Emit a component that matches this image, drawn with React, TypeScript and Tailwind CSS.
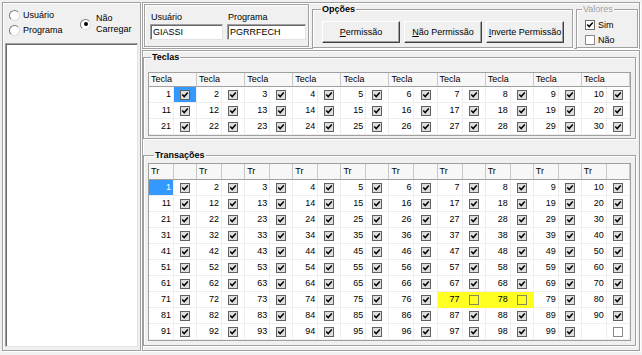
import clsx from "clsx";

const etched = "border border-[#a0a0a0] shadow-[inset_1px_1px_0_#fff,1px_1px_0_#fff]";
const sunken = "border border-t-[#a0a0a0] border-l-[#a0a0a0] border-r-[#e3e3e3] border-b-[#e3e3e3] shadow-[inset_1px_1px_0_#696969]";

function Check({ on, tone = "grid" }: { on: boolean; tone?: "grid" | "yellow" | "plain" }) {
  return (
    <span
      className={clsx(
        "inline-flex h-[10px] w-[10px] items-center justify-center border",
        on && tone === "grid" && "border-[#5f5f5f] bg-[#dedede]",
        on && tone === "plain" && "border-[#6b6b6b] bg-white",
        !on && tone === "yellow" && "border-[#8a8a55] bg-transparent",
        !on && tone !== "yellow" && "border-[#8a8a8a] bg-white"
      )}
    >
      {on && (
        <svg viewBox="0 0 10 10" className="h-[8px] w-[8px]">
          <path d="M1.5 4.5 L4 7 L8.5 2" stroke="#000" strokeWidth="1.8" fill="none" />
        </svg>
      )}
    </span>
  );
}

function Radio({ on }: { on?: boolean }) {
  return (
    <span className="inline-flex h-[11px] w-[11px] shrink-0 items-center justify-center rounded-full border border-t-[#7a7a7a] border-l-[#7a7a7a] border-r-[#dcdcdc] border-b-[#dcdcdc] bg-white">
      {on && <span className="h-[4px] w-[4px] rounded-full bg-black" />}
    </span>
  );
}

function Btn({ k, rest }: { k: string; rest: string }) {
  return (
    <button className="h-[22px] w-[78px] border border-t-white border-l-white border-r-[#404040] border-b-[#404040] bg-[#f0f0f0] text-[9px] shadow-[inset_-1px_-1px_0_#a0a0a0]">
      <span className="underline">{k}</span>
      {rest}
    </button>
  );
}

const gridCols = "grid grid-cols-[repeat(10,25px_23.1px)] w-fit border border-[#a0a0a0] bg-white";
const headCell = "flex items-center pl-[2px] bg-[#f7f7f7] border-r border-b border-r-[#c8c8c8] border-b-[#a0a0a0]";
const numCell = "flex items-center justify-end pr-[2px] border-r border-b border-[#eeeeee]";
const chkCell = "flex items-center justify-center border-r border-b border-[#eeeeee]";

function Teclas() {
  const rows = [0, 1, 2];
  return (
    <div className={clsx(gridCols, "grid-rows-[14px_repeat(3,16px)]")}>
      {Array.from({ length: 10 }).map((_, i) => (
        <div key={"h" + i} className={clsx(headCell, "col-span-2")}>Tecla</div>
      ))}
      {rows.map((r) =>
        Array.from({ length: 10 }).map((_, c) => {
          const n = r * 10 + c + 1;
          const sel = n === 1;
          return [
            <div key={"n" + n} className={numCell}>{n}</div>,
            <div key={"c" + n} className={clsx(chkCell, sel && "bg-[#3399ff]")}>
              <Check on />
            </div>,
          ];
        })
      )}
    </div>
  );
}

function Transacoes() {
  const rows = Array.from({ length: 10 }, (_, i) => i);
  return (
    <div className={clsx(gridCols, "grid-rows-[16px_repeat(10,16px)]")}>
      {Array.from({ length: 10 }).map((_, i) => [
        <div key={"h" + i} className={headCell}>Tr</div>,
        <div key={"e" + i} className={headCell} />,
      ])}
      {rows.map((r) =>
        Array.from({ length: 10 }).map((_, c) => {
          const n = r * 10 + c + 1;
          const off = n === 77 || n === 78 || n === 100;
          const yellow = n === 77 || n === 78;
          return [
            <div
              key={"n" + n}
              className={clsx(numCell, n === 1 && "bg-[#3399ff] text-white", yellow && "bg-[#ffff22] border-[#ffff22]")}
            >
              {n < 100 ? n : ""}
            </div>,
            <div key={"c" + n} className={clsx(chkCell, yellow && "bg-[#ffff22] border-[#ffff22]")}>
              <Check on={!off} tone={yellow ? "yellow" : "grid"} />
            </div>,
          ];
        })
      )}
    </div>
  );
}

export default function App() {
  return (
    <div className="flex h-[355px] w-[642px] gap-[1px] overflow-hidden bg-[#f0f0f0] px-[2px] pt-[2px] pb-[4px] font-['Liberation_Sans',Arial,sans-serif] text-[9px] leading-none text-black">
      {/* left: mode + list */}
      <div className={clsx(etched, "flex w-[139px] flex-col")}>
        <div className="flex h-[40px]">
          <div className="flex w-[77px] flex-col gap-[2px] pt-[6px] pl-[6px]">
            <label className="flex h-[13px] items-center gap-[3px]">
              <Radio />
              Usuário
            </label>
            <label className="flex h-[13px] items-center gap-[3px]">
              <Radio />
              Programa
            </label>
          </div>
          <label className="flex items-center gap-[5px] pt-[2px]">
            <Radio on />
            <span className="leading-[11px]">
              Não
              <br />
              Carregar
            </span>
          </label>
        </div>
        <div className={clsx(sunken, "mx-[2px] mb-[3px] flex-1 bg-white")} />
      </div>

      <div className="flex flex-1 flex-col gap-[1px]">
        {/* top options */}
        <div className={clsx(etched, "flex h-[47px] gap-[3px] pl-[1px]")}>
          <div className={clsx(etched, "mt-[1px] flex h-[43px] w-[165px] gap-[4px] pt-[8px] pl-[5px]")}>
            <div className="flex w-[73px] flex-col gap-[2px]">
              <span className="pl-[1px]">Usuário</span>
              <div className={clsx(sunken, "flex h-[16px] items-center bg-white pl-[2px]")}>GIASSI</div>
            </div>
            <div className="flex w-[79px] flex-col gap-[2px]">
              <span className="pl-[1px]">Programa</span>
              <div className={clsx(sunken, "flex h-[16px] items-center bg-white pl-[2px]")}>PGRRFECH</div>
            </div>
          </div>

          <fieldset className={clsx(etched, "mt-[2px] h-[43px] w-[261px]")}>
            <legend className="ml-[8px] px-[1px] font-bold">Opções</legend>
            <div className="flex gap-[4px] pt-[7px] pl-[9px]">
              <Btn k="P" rest="ermissão" />
              <Btn k="N" rest="ão Permissão" />
              <Btn k="I" rest="nverte Permissão" />
            </div>
          </fieldset>

          <fieldset className={clsx(etched, "mt-[2px] h-[43px] w-[62px]")}>
            <legend className="ml-[5px] px-[1px] text-[#a0a0a0]">Valores</legend>
            <div className="flex flex-col gap-[3px] pt-[5px] pl-[8px]">
              <label className="flex h-[12px] items-center gap-[3px]">
                <Check on tone="plain" />
                Sim
              </label>
              <label className="flex h-[12px] items-center gap-[3px]">
                <Check on={false} tone="plain" />
                Não
              </label>
            </div>
          </fieldset>
        </div>

        {/* grids */}
        <div className={clsx(etched, "flex flex-1 flex-col")}>
          <fieldset className={clsx(etched, "mt-[2px] w-[493px] pt-[10px] pb-[2px] pl-[4px]")}>
            <legend className="ml-[3px] px-[1px] font-bold">Teclas</legend>
            <Teclas />
          </fieldset>
          <fieldset className={clsx(etched, "mt-[12px] w-[493px] pt-[3px] pb-[4px] pl-[4px]")}>
            <legend className="ml-[6px] px-[1px] font-bold">Transações</legend>
            <Transacoes />
          </fieldset>
        </div>
      </div>
    </div>
  );
}
